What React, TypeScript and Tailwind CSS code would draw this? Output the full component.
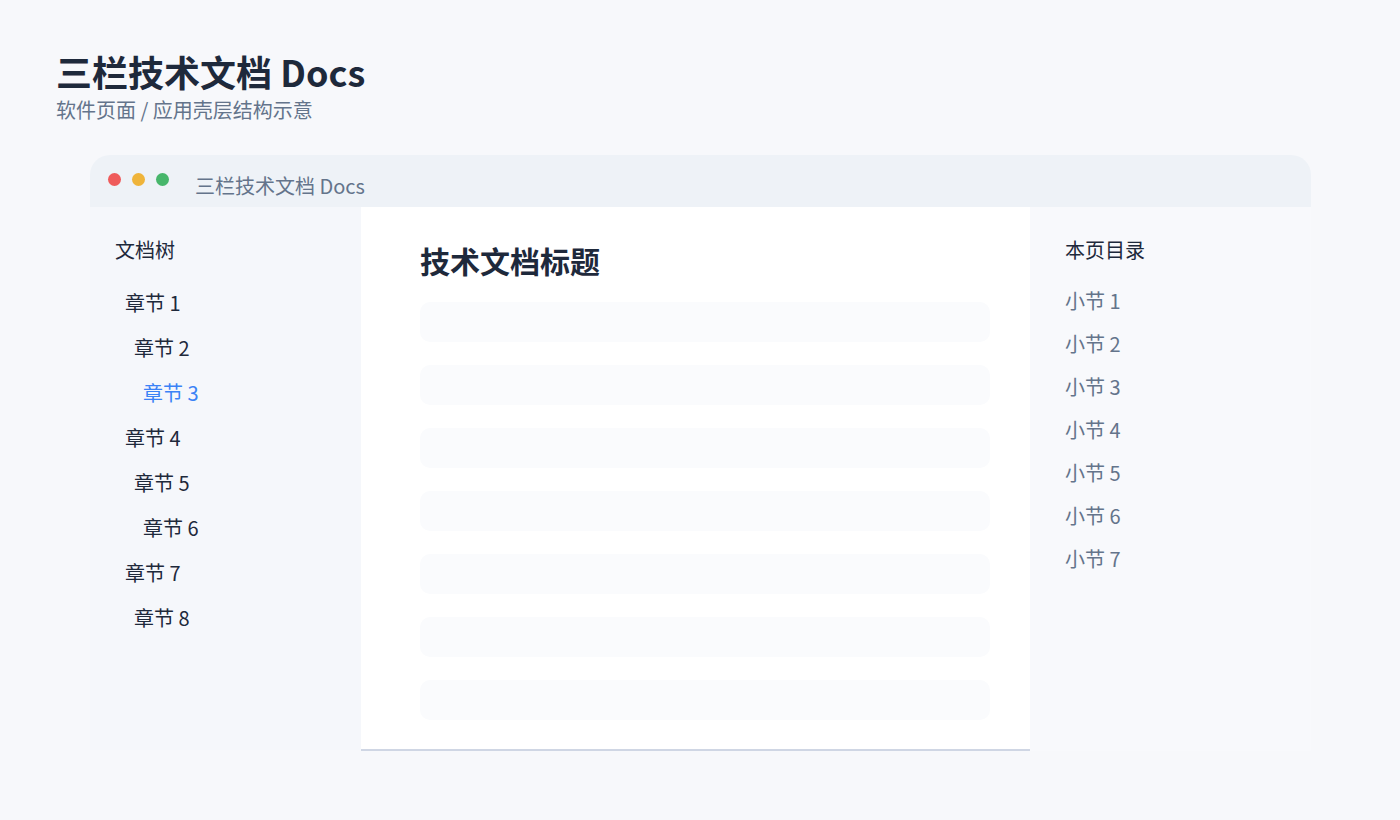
import React from "react";

const tree = [
  { label: "章节 1", level: 0 },
  { label: "章节 2", level: 1 },
  { label: "章节 3", level: 2, active: true },
  { label: "章节 4", level: 0 },
  { label: "章节 5", level: 1 },
  { label: "章节 6", level: 2 },
  { label: "章节 7", level: 0 },
  { label: "章节 8", level: 1 },
];

const indent = ["pl-[10px]", "pl-[19px]", "pl-[28px]"];

const toc = ["小节 1", "小节 2", "小节 3", "小节 4", "小节 5", "小节 6", "小节 7"];

export default function App() {
  return (
    <div
      className="min-h-[820px] w-[1400px] bg-[#f7f8fb] pl-[56px] pt-[49px]"
      style={{ fontFamily: '"Noto Sans CJK SC", "Noto Sans", sans-serif' }}
    >
      <h1 className="text-[36px] font-bold leading-[44px] text-[#1e293b]">三栏技术文档 Docs</h1>
      <p className="text-[20px] leading-[34px] text-[#64748b]">软件页面 / 应用壳层结构示意</p>

      <div className="ml-[34px] mt-[28px] w-[1221px] overflow-hidden rounded-t-[20px]">
        {/* window title bar */}
        <div className="flex h-[52px] items-start bg-[#eef2f7] pl-[18px]">
          <div className="mt-[18px] flex gap-[11px]">
            <span className="h-[13px] w-[13px] rounded-full bg-[#ef5b5b]" />
            <span className="h-[13px] w-[13px] rounded-full bg-[#efb43a]" />
            <span className="h-[13px] w-[13px] rounded-full bg-[#47b66b]" />
          </div>
          <span className="ml-[26px] mt-[17px] text-[20px] leading-[28px] text-[#64748b]">三栏技术文档 Docs</span>
        </div>

        <div className="flex items-start">
          {/* document tree */}
          <aside className="h-[543px] w-[271px] shrink-0 bg-[#f5f7fb] pl-[25px] pt-[29px]">
            <div className="text-[20px] leading-[28px] text-[#1e293b]">文档树</div>
            <ul className="mt-[25px] flex flex-col gap-[17px]">
              {tree.map((t) => (
                <li
                  key={t.label}
                  className={`${indent[t.level]} text-[20px] leading-[28px] ${t.active ? "text-[#3b82f6]" : "text-[#1e293b]"}`}
                >
                  {t.label}
                </li>
              ))}
            </ul>
          </aside>

          {/* article */}
          <main className="w-[669px] shrink-0 border-b-2 border-[#cfd6e4] bg-white pb-[29px] pl-[59px] pr-[40px] pt-[35px]">
            <h2 className="text-[30px] font-bold leading-[36px] text-[#1e293b]">技术文档标题</h2>
            <div className="mt-[24px] flex flex-col gap-[23px]">
              {Array.from({ length: 7 }).map((_, i) => (
                <div key={i} className="h-[40px] w-[570px] rounded-[10px] bg-[#fafbfd]" />
              ))}
            </div>
          </main>

          {/* on this page */}
          <aside className="h-[544px] w-[281px] shrink-0 bg-[#f8f9fc] pl-[35px] pt-[29px]">
            <div className="text-[20px] leading-[28px] text-[#1e293b]">本页目录</div>
            <ul className="mt-[23px] flex flex-col gap-[15px]">
              {toc.map((s) => (
                <li key={s} className="text-[20px] leading-[28px] text-[#64748b]">
                  {s}
                </li>
              ))}
            </ul>
          </aside>
        </div>
      </div>
    </div>
  );
}
